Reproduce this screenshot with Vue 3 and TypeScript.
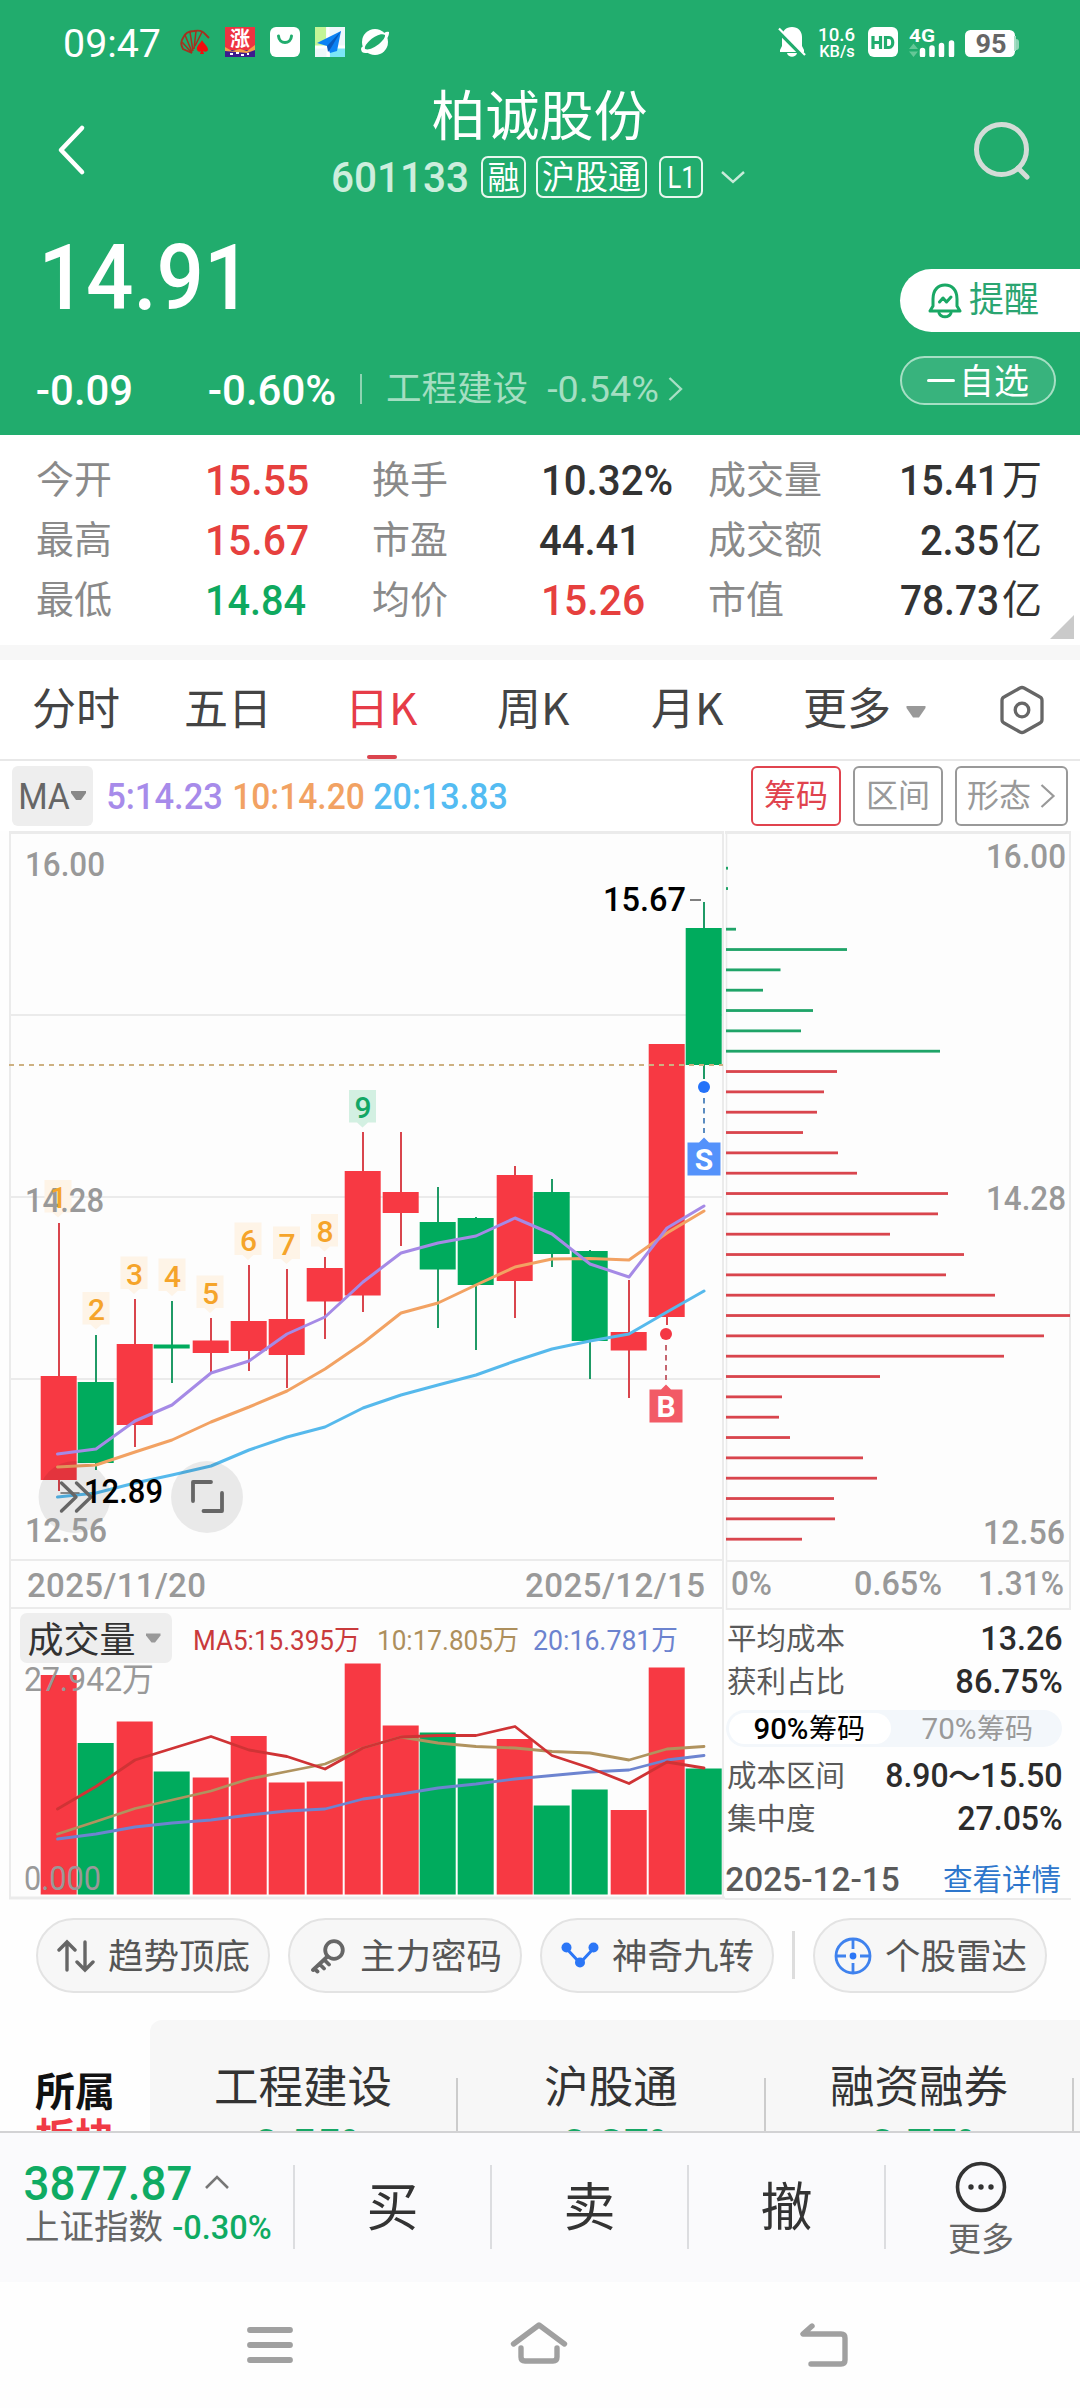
<script setup lang="ts">
import { h, type FunctionalComponent } from 'vue'

// Condensed numeral label: `w` is the drawn width, `s` the font size.
const Num: FunctionalComponent<{ t: string; w: number; s: number }> = (p) =>
  h('svg', { class: 'num', width: p.w, height: p.s * 0.711, style: 'overflow:visible;flex:none;display:block' }, [
    h('text', {
      x: -0.05 * p.s,
      y: p.s * 0.711,
      'font-size': p.s,
      fill: 'currentColor',
      textLength: p.w + 0.1 * p.s,
      lengthAdjust: 'spacingAndGlyphs',
    }, p.t),
  ])
Num.props = ['t', 'w', 's']

interface Stat { label: string; value: string; w: number; tone: string; unit?: string }
const stats: Stat[] = [
  { label: '今开', value: '15.55', w: 100, tone: 'up' },
  { label: '换手', value: '10.32%', w: 128, tone: '' },
  { label: '成交量', value: '15.41', w: 96, tone: '', unit: '万' },
  { label: '最高', value: '15.67', w: 100, tone: 'up' },
  { label: '市盈', value: '44.41', w: 98, tone: 'wide' },
  { label: '成交额', value: '2.35', w: 75, tone: '', unit: '亿' },
  { label: '最低', value: '14.84', w: 97, tone: 'down' },
  { label: '均价', value: '15.26', w: 100, tone: 'up' },
  { label: '市值', value: '78.73', w: 95, tone: '', unit: '亿' },
]

const RED = '#f73943'
const GREEN = '#00ab5d'

const centers = [59, 96, 135, 172, 211, 249, 287, 325, 363, 401, 438, 476, 515, 552, 590, 629, 667, 704]
// [rising, body top, body bottom, high, low]
const candles: [number, number, number, number, number][] = [
  [1, 1376, 1480, 1223, 1491], [0, 1382, 1463, 1335, 1470], [1, 1344, 1425, 1299, 1447],
  [0, 1344.5, 1348.5, 1301, 1383], [1, 1340.5, 1353, 1318, 1374], [1, 1321, 1351, 1265, 1371],
  [1, 1319, 1355, 1269, 1388], [1, 1268, 1301.5, 1257, 1339], [1, 1171, 1295.5, 1132, 1312],
  [1, 1192, 1213, 1132, 1246], [0, 1222, 1269.5, 1187, 1328], [0, 1218, 1285, 1217, 1350],
  [1, 1175, 1281, 1166, 1318], [0, 1192, 1254, 1179, 1267], [0, 1251, 1341, 1250, 1379],
  [1, 1332, 1350.5, 1280, 1398], [1, 1044, 1317, 1044, 1325], [0, 928, 1065, 902, 1079],
]
const volumes = [1675, 1743, 1721.5, 1771.5, 1777.5, 1736, 1782.5, 1781.5, 1663.5, 1725.5, 1732.5, 1778.5, 1739, 1805.5, 1789.5, 1810, 1667.5, 1768.5]

const line = (ys: number[]) => ys.map((y, i) => `${centers[i] - (i === 0 ? 1.5 : 0)},${y}`).join(' ')
const ma5 = line([1454, 1449, 1421, 1405, 1373, 1361, 1334, 1317, 1282, 1253, 1243, 1236, 1218, 1234, 1264, 1277, 1228, 1206])
const ma10 = line([1467, 1465, 1452, 1440, 1422, 1407, 1391, 1369, 1343, 1313, 1303, 1285, 1267, 1259, 1258.5, 1260, 1233, 1211])
const ma20 = line([1497, 1493, 1483, 1475, 1466, 1450, 1437, 1427, 1408, 1395, 1385, 1375, 1361, 1349, 1341, 1334, 1312, 1291])
const vma5 = line([1809, 1786.5, 1760, 1748.5, 1736.5, 1750, 1756.5, 1769, 1748, 1737, 1735.5, 1735.5, 1726.5, 1755.5, 1768, 1783.5, 1762, 1768])
const vma10 = line([1834, 1821.5, 1808.5, 1800, 1791, 1779, 1771.5, 1764, 1748, 1737, 1743, 1746.5, 1748, 1751.5, 1753, 1760, 1749, 1746.5])
const vma20 = line([1839, 1834, 1827, 1823, 1820, 1815, 1811, 1809, 1799, 1794, 1788, 1784, 1779, 1775.5, 1772, 1770, 1760, 1755.5])

// nine-turn markers: [centre x, top]
const tags: [number, number][] = [[58, 1180], [96, 1292], [134, 1256.5], [172, 1258.5], [210, 1275.5], [248, 1222.5], [286.5, 1226.5], [324.5, 1214], [362.5, 1090]]

// end x of every price level of the chip distribution
const chips = [728, 728, 0, 736, 847, 780.5, 763, 813, 801, 940, 837, 824, 817, 803, 838, 857, 948, 938, 890, 964, 946, 995, 1070, 1044, 1004, 880, 782, 779, 790, 863, 877, 834, 835, 802]

const sectors = [
  { name: '工程建设', change: '-0.55%' },
  { name: '沪股通', change: '-0.37%' },
  { name: '融资融券', change: '-0.77%' },
]
</script>

<template>
  <div class="screen">
    <header class="head">
      <div class="status">
        <Num class="r" t="09:47" :w="94" :s="39.5" />
        <svg class="s1" width="30" height="30" viewBox="0 0 30 30" fill="none" stroke="#a5301f" stroke-width="1.5">
          <path d="M12 26L3 22C0 17 1 14 3 11C5 6 10 4 14 4C19 3 23 4 25 7L29 11" stroke-width="1.900" />
          <path d="M12 26L2 15M12 25L5 8M13 24L10 5M14 22L16 4M15 19L22 5" />
          <path d="M22 13C20 17 16 19 17 23C18 25 20 25 21 24L20 27H24L23 24C25 25 27 25 28 23C28 19 24 17 22 13Z" fill="#f30d0d" stroke="none" />
        </svg>
        <svg width="30" height="30" viewBox="0 0 30 30">
          <rect width="30" height="30" fill="#ee3341" />
          <rect y="23" width="30" height="7" fill="#3d1b8e" />
          <path d="M0 20L7 24L15 22L22 24L30 18V23L22 26L0 24Z" fill="#f5a04a" />
          <path d="M5 27H8M11 26H14M16 28H19M22 27H24" stroke="#fff" stroke-width="2" />
          <text x="5" y="19" font-size="20" font-weight="700" fill="#fff">涨</text>
        </svg>
        <svg width="30" height="30" viewBox="0 0 30 30"><rect width="30" height="30" rx="6" fill="#fff" /><path d="M8.500 9C9 17.500 21 17.500 21.500 9" fill="none" stroke="#21ac6d" stroke-width="3" stroke-linecap="round" /></svg>
        <svg width="30" height="30" viewBox="0 0 30 30">
          <rect width="30" height="30" fill="#eef7fa" /><rect width="11" height="20" fill="#c3f597" /><rect x="15" y="21" width="15" height="9" fill="#7be6f7" /><path d="M0 20H30M13 0V30" stroke="#fff" stroke-width="3" />
          <path d="M26 4L2 16L12 19L15 26L22 24Z" fill="#0b82f4" /><path d="M26 4L12 19L13 25L16 21Z" fill="#0759bd" />
        </svg>
        <svg width="30" height="30" viewBox="0 0 30 30">
          <circle cx="15" cy="15" r="13" fill="#fff" /><path d="M2 25C-2 18 7 19 15 14C22 10 24 3 29 5C30 14 9 30 2 25Z" fill="#fff" />
          <path d="M5 22C3 17 19 4 25 8C26 13 11 25 5 22Z" fill="#21ac6d" />
        </svg>
        <svg class="bell" width="28" height="30" viewBox="0 0 28 30">
          <path d="M14 0C20 0 24 4 24 10V19L26 23V25H2V23L4 19V10C4 4 8 0 14 0ZM9 26H19C18 31 10 31 9 26Z" fill="#fff" />
          <path d="M-1 3L25 29" stroke="#21ac6d" stroke-width="4" /><path d="M1 1.500L27 28" stroke="#fff" stroke-width="2.200" />
        </svg>
        <div class="speed"><Num class="m" t="10.6" :w="35" :s="19" /><Num class="m" t="KB/s" :w="34" :s="16.5" /></div>
        <svg class="hd" width="30" height="30" viewBox="0 0 30 30"><rect width="30" height="30" rx="6" fill="#fff" /><path d="M5 9V22M12.500 9V22M5 15.500H12.500M17.500 10.500H21C26 10.500 26 20.500 21 20.500H17.500Z" fill="none" stroke="#21ac6d" stroke-width="3.200" /></svg>
        <svg class="sig" width="46" height="30" viewBox="0 0 46 30">
          <text x="0" y="14.500" font-size="19" font-weight="700" fill="#fff" textLength="26" lengthAdjust="spacingAndGlyphs">4G</text>
          <path d="M0 22L4.500 16.500L9 22ZM0 24.500L4.500 30L9 24.500Z" fill="#65c797" />
          <path d="M13.500 23.500V28M23 21V28M32.500 18.500V28M42.500 16V28" stroke="#fff" stroke-width="5.500" stroke-linecap="round" />
        </svg>
        <svg class="bat" width="55" height="28" viewBox="0 0 55 28"><rect x="46" y="9" width="8" height="11" rx="3" fill="#8fd5b5" /><rect width="50" height="27" rx="5.500" fill="#fff" /><path d="M50 6V21" stroke="#a6dec4" stroke-width="2" /><text x="10.500" y="23" font-size="25" font-weight="700" fill="#666" textLength="31" lengthAdjust="spacingAndGlyphs">95</text></svg>
      </div>

      <div class="titlebar">
        <svg class="back" width="30" height="52" viewBox="0 0 30 52"><path d="M26 4L5 26L26 48" fill="none" stroke="#fff" stroke-width="4.600" stroke-linecap="round" stroke-linejoin="round" /></svg>
        <div class="title">
          <h1>柏诚股份</h1>
          <div class="sub">
            <Num class="code" t="601133" :w="134" :s="42" />
            <span class="badge">融</span><span class="badge wide">沪股通</span><span class="badge l1"><Num t="L1" :w="25" :s="31" /></span>
            <svg width="26" height="16" viewBox="0 0 26 16"><path d="M2 3L13 13L24 3" fill="none" stroke="#c8ebd9" stroke-width="2.400" /></svg>
          </div>
        </div>
        <svg width="58" height="60" viewBox="0 0 58 60" fill="none" stroke="#d3dcd7" stroke-width="5"><circle cx="28.500" cy="28.500" r="25" /><path d="M45 47L54 56" stroke-linecap="round" /></svg>
      </div>

      <div class="quote">
        <div class="qleft">
          <Num class="m" t="14.91" :w="204" :s="90" />
          <div class="change">
            <Num class="m" t="-0.09" :w="93" :s="43" />
            <Num class="m pct" t="-0.60%" :w="124" :s="43" />
            <i class="bar"></i>
            <span class="industry">工程建设</span>
            <Num class="r soft" t="-0.54%" :w="108" :s="37" />
            <svg class="more" width="15" height="26" viewBox="0 0 15 26"><path d="M1.500 2L13 13L1.500 24" fill="none" stroke="#a8dfc5" stroke-width="2.400" /></svg>
          </div>
        </div>
        <div class="qright">
          <div class="remind">
            <svg width="34" height="36" viewBox="0 0 34 36" fill="none" stroke="#1aa865" stroke-width="3" stroke-linejoin="round" stroke-linecap="round"><path d="M5 16C5 7 10 2 17 2S29 7 29 16V23L32 28H2L5 23Z" /><path d="M11 30C13 35 21 35 23 30" /><path d="M11.500 19L15 15L18.500 19L23 14" /></svg>
            <span>提醒</span>
          </div>
          <div class="fav"><i></i><span>自选</span></div>
        </div>
      </div>
    </header>

    <section class="stats">
      <template v-for="s in stats" :key="s.label">
        <span class="label">{{ s.label }}</span>
        <span class="value" :class="s.tone"><Num class="m" :t="s.value" :w="s.w" :s="42.500" /><b v-if="s.unit">{{ s.unit }}</b></span>
      </template>
      <i class="fold"></i>
    </section>

    <nav class="tabs">
      <span class="t1">分时</span><span class="t2">五日</span><span class="t3 on">日K</span><span class="t4">周K</span><span class="t5">月K</span><span class="t6">更多</span>
      <svg width="22" height="14" viewBox="0 0 22 14"><path d="M1.500 1H20.500V3L14 12.500H8L1.500 3Z" fill="#999" /></svg>
      <svg class="gear" width="44" height="50" viewBox="0 0 44 50" fill="none" stroke="#666" stroke-width="3.300" stroke-linejoin="round"><path d="M20 3Q22 2 24 3L40 12Q42 13 42 15.500V34.500Q42 37 40 38L24 47Q22 48 20 47L4 38Q2 37 2 34.500V15.500Q2 13 4 12Z" /><circle cx="22" cy="25" r="6.800" /></svg>
    </nav>

    <div class="mabar">
      <div class="chip"><Num class="r" t="MA" :w="48" :s="37" /><svg width="15" height="10" viewBox="0 0 15 10"><path d="M0 0H15V2L10 9H5L0 2Z" fill="#888" /></svg></div>
      <Num class="m m5" t="5:14.23" :w="113" :s="37" />
      <Num class="m m10" t="10:14.20" :w="129" :s="37" />
      <Num class="m m20" t="20:13.83" :w="131" :s="37" />
      <span class="btn act">筹码</span><span class="btn">区间</span>
      <span class="btn shape">形态<svg width="16" height="26" viewBox="0 0 16 26"><path d="M1.500 2L13.500 13L1.500 24" fill="none" stroke="#999" stroke-width="2.200" /></svg></span>
    </div>

    <div class="charts">
      <svg class="kline" width="725" height="1070" viewBox="0 831 725 1070">
        <rect x="10" y="832" width="713" height="1066" fill="#fdfdfd" />
        <g stroke="#ebebeb" stroke-width="2" fill="none">
          <path d="M9 832.500H724" stroke-width="3" />
          <path d="M10 831V1898M723 831V1898" />
          <path d="M11 1015H723M11 1197H723M11 1379H723M11 1560H723M11 1608H723" />
          <path d="M9 1898H725" stroke-width="3" />
        </g>

        <g v-for="(c, i) in candles" :key="i" :fill="c[0] ? RED : GREEN">
          <rect :x="centers[i] - 1" :y="c[3]" width="2" :height="c[4] - c[3]" :fill="c[0] ? '#d9454d' : '#1f9a66'" />
          <rect :x="centers[i] - 18.300" :y="c[1]" width="36" :height="c[2] - c[1]" />
        </g>
        <path d="M9 1065H723" stroke="#cdb182" stroke-width="2" stroke-dasharray="5 5" />
        <g fill="none" stroke-width="3" stroke-linecap="round" stroke-linejoin="round">
          <polyline :points="ma20" stroke="#56b9ec" /><polyline :points="ma10" stroke="#f2a263" /><polyline :points="ma5" stroke="#a58ae6" />
        </g>

        <path v-for="(t, i) in tags" :key="'b' + i" :d="`M${t[0] - 13.5} ${t[1]}h27v32.500h-8l-5.500 5l-5.500 -5h-8z`" :fill="i === 8 ? '#d3f0e2' : '#fef4e7'" />
        <g class="axis">
          <text x="25" y="876" textLength="80" lengthAdjust="spacingAndGlyphs">16.00</text>
          <text x="25" y="1212" textLength="79" lengthAdjust="spacingAndGlyphs">14.28</text>
        </g>
        <text v-for="(t, i) in tags" :key="'t' + i" class="tag" :x="t[0] + 0.5" :y="t[1] + 28" :fill="i === 8 ? '#13a765' : '#f5a42a'">{{ i + 1 }}</text>

        <circle cx="74.500" cy="1497" r="36" fill="#000" fill-opacity=".08" />
        <circle cx="207" cy="1497" r="36" fill="#000" fill-opacity=".08" />
        <g fill="none" stroke="#666" stroke-linecap="round" stroke-linejoin="round">
          <path d="M61.500 1483L76 1497L61.500 1511M76.500 1483L91 1497L76.500 1511" stroke-width="3.400" />
          <path d="M193 1501V1482H211M203.500 1511H222V1493" stroke-width="3.800" />
          <path d="M61 1493H79" stroke-width="1.500" />
        </g>
        <g class="axis">
          <text x="25" y="1542" textLength="82" lengthAdjust="spacingAndGlyphs">12.56</text>
          <text x="27" y="1597" textLength="179" lengthAdjust="spacing">2025/11/20</text>
          <text x="525" y="1597" textLength="180" lengthAdjust="spacing">2025/12/15</text>
        </g>
        <g class="axis black">
          <text x="84" y="1503" textLength="79" lengthAdjust="spacingAndGlyphs">12.89</text>
          <text x="603" y="911" textLength="83" lengthAdjust="spacingAndGlyphs">15.67</text>
        </g>
        <path d="M690 900H701" stroke="#555" stroke-width="1.500" />

        <circle cx="704" cy="1087" r="6" fill="#2472f9" />
        <path d="M704 1098V1133" stroke="#5b8cc0" stroke-width="2" stroke-dasharray="5.500 4.500" />
        <path d="M687.500 1142.500H699L704 1137.500L709 1142.500H720.500V1175.500H687.500Z" fill="#5492fb" />
        <text class="sign" x="704" y="1170">S</text>
        <circle cx="666" cy="1334" r="6" fill="#f43744" />
        <path d="M666 1345V1380" stroke="#c5656f" stroke-width="2" stroke-dasharray="5.500 4.500" />
        <path d="M649.500 1389.500H661L666 1384.500L671 1389.500H682.500V1422.500H649.500Z" fill="#f25b66" />
        <text class="sign" x="666" y="1417">B</text>

        <rect x="20" y="1613" width="152" height="50" rx="7" fill="#eee" />
        <text class="cjk" x="27.500" y="1653" font-size="36" fill="#333">成交量</text>
        <path d="M146 1633.500H160.500V1635.500L155 1642.500H151.500L146 1635.500Z" fill="#999" />
        <rect v-for="(y, i) in volumes" :key="'v' + i" :x="centers[i] - 18.300" :y="y" width="36" :height="1894.500 - y" :fill="candles[i][0] ? RED : GREEN" />
        <g fill="none" stroke-width="2.800" stroke-linecap="round" stroke-linejoin="round">
          <polyline :points="vma10" stroke="#b0935f" /><polyline :points="vma20" stroke="#6d84d0" /><polyline :points="vma5" stroke="#cf3335" />
        </g>
        <g class="vol">
          <text x="193" y="1650" textLength="167" lengthAdjust="spacingAndGlyphs" fill="#c93a3c">MA5:15.395万</text>
          <text x="377" y="1650" textLength="142" lengthAdjust="spacingAndGlyphs" fill="#ad8f5c">10:17.805万</text>
          <text x="533" y="1650" textLength="145" lengthAdjust="spacingAndGlyphs" fill="#6c83cf">20:16.781万</text>
        </g>
        <g class="axis thin">
          <text x="24" y="1691" textLength="130" lengthAdjust="spacingAndGlyphs">27.942万</text>
          <text x="24" y="1890" textLength="77" lengthAdjust="spacingAndGlyphs">0.000</text>
        </g>
      </svg>

      <div class="side">
        <svg width="355" height="780" viewBox="725 831 355 780">
          <rect x="727" y="832" width="343" height="777" fill="#fdfdfd" />
          <g stroke="#ebebeb" stroke-width="2" fill="none"><path d="M725 832.500H1071" stroke-width="3" /><path d="M726.500 832V1610" stroke-width="1.500" /><path d="M1070 831V1610M727 1561H1070M726 1609H1071" /></g>
          <template v-for="(x, i) in chips" :key="i">
            <rect v-if="x" x="726" :y="866.800 + i * 20.333" :width="x - 726" height="2.800" :fill="i < 10 ? '#1fa468' : '#d9454d'" />
          </template>
          <g class="axis">
            <text x="986" y="868" textLength="80" lengthAdjust="spacingAndGlyphs">16.00</text>
            <text x="986" y="1210" textLength="80" lengthAdjust="spacingAndGlyphs">14.28</text>
            <text x="983" y="1544" textLength="82" lengthAdjust="spacingAndGlyphs">12.56</text>
            <text x="731" y="1595" textLength="41" lengthAdjust="spacingAndGlyphs">0%</text>
            <text x="854" y="1595" textLength="88" lengthAdjust="spacingAndGlyphs">0.65%</text>
            <text x="978" y="1595" textLength="86" lengthAdjust="spacingAndGlyphs">1.31%</text>
          </g>
        </svg>
        <div class="info">
          <div class="row"><span>平均成本</span><Num class="m" t="13.26" :w="79" :s="33.500" /></div>
          <div class="row"><span>获利占比</span><Num class="m" t="86.75%" :w="104" :s="33.500" /></div>
          <div class="switch">
            <div class="sel"><Num class="m" t="90%" :w="52" :s="30" /><span>筹码</span></div>
            <div class="off"><Num t="70%" :w="52" :s="30" /><span>筹码</span></div>
          </div>
          <div class="row"><span>成本区间</span><div class="range"><Num class="m" t="8.90" :w="60" :s="33.500" /><b>～</b><Num class="m" t="15.50" :w="79" :s="33.500" /></div></div>
          <div class="row"><span>集中度</span><Num class="m" t="27.05%" :w="102" :s="33.500" /></div>
          <div class="row last"><Num class="m date" t="2025-12-15" :w="171" :s="33.500" /><a>查看详情</a></div>
        </div>
      </div>
    </div>

    <div class="tools">
      <div class="tool"><svg width="38" height="34" viewBox="0 0 38 34" fill="none" stroke="#666" stroke-width="3.400" stroke-linecap="round"><path d="M10 31V3M2 11L10 3L18 11M28 3V31M20 23L28 31L36 23" /></svg><span>趋势顶底</span></div>
      <div class="tool"><svg width="38" height="36" viewBox="0 0 38 36" fill="none" stroke="#666" stroke-width="3.800" stroke-linecap="round"><circle cx="25" cy="12" r="8.800" /><path d="M18.500 18.500L4 32M11 26.500L15 30.500M5.500 31L8.500 33.500M15.500 22L20 26.500" /></svg><span>主力密码</span></div>
      <div class="tool"><svg width="38" height="34" viewBox="0 0 38 34"><path d="M5 9L19 24L33 9" fill="none" stroke="#2b76f6" stroke-width="3" /><g fill="#2b76f6"><circle cx="5.500" cy="8.500" r="5" /><circle cx="19" cy="23.500" r="5" /><circle cx="32.500" cy="8.500" r="5" /></g></svg><span>神奇九转</span></div>
      <i></i>
      <div class="tool"><svg width="38" height="38" viewBox="0 0 38 38" fill="none" stroke="#3f82ee" stroke-width="2.800"><circle cx="19" cy="19" r="17" /><path d="M19 3V12M19 26V35M3 19H12M26 19H35" /><circle cx="19" cy="19" r="3.400" fill="#2b76f6" stroke="none" /></svg><span>个股雷达</span></div>
    </div>

    <section class="sectors">
      <div class="belong"><b>所属</b><b class="red">板块</b></div>
      <div class="list">
        <div v-for="s in sectors" :key="s.name" class="sector"><span>{{ s.name }}</span><Num class="m" :t="s.change" :w="130" :s="43" /></div>
      </div>
    </section>

    <footer class="trade">
      <div class="index">
        <div class="line1"><Num class="m" t="3877.87" :w="164" :s="49" /><svg width="26" height="16" viewBox="0 0 26 16"><path d="M2 14L13 3L24 14" fill="none" stroke="#777" stroke-width="2.600" /></svg></div>
        <div class="line2"><span>上证指数</span><Num class="m" t="-0.30%" :w="96" :s="34" /></div>
      </div>
      <div class="act-btn">买</div><div class="act-btn">卖</div><div class="act-btn">撤</div>
      <div class="act-btn dots">
        <svg width="54" height="54" viewBox="0 0 54 54"><circle cx="27" cy="27" r="23.500" fill="none" stroke="#333" stroke-width="3.600" /><g fill="#333"><circle cx="17" cy="27" r="2.700" /><circle cx="27" cy="27" r="2.700" /><circle cx="37" cy="27" r="2.700" /></g></svg>
        <span>更多</span>
      </div>
    </footer>

    <div class="sysnav">
      <svg width="46" height="38" viewBox="0 0 46 38" stroke="#a0a0a0" stroke-width="5.800" stroke-linecap="round"><path d="M3 4H43M3 19H43M3 34H43" /></svg>
      <svg class="home" width="58" height="46" viewBox="0 0 58 46" fill="none" stroke="#a0a0a0" stroke-width="5.400" stroke-linecap="round" stroke-linejoin="round"><path d="M3.500 24L29 5L54.500 24" /><path d="M11 28V37Q11 41 15 41H43Q47 41 47 37V28" /></svg>
      <svg width="50" height="46" viewBox="0 0 50 46" fill="none" stroke="#a0a0a0" stroke-width="5.400" stroke-linecap="round" stroke-linejoin="round"><path d="M13 4L4 12H42Q46 12 46 16V38Q46 42 42 42H12" /></svg>
    </div>
  </div>
</template>

<style>
body { background: #fff; }
.num { font-family: Roboto, "Noto Sans CJK SC", sans-serif; }
.num.m { font-weight: 500; }
</style>

<style scoped>
.screen { width: 1080px; height: 2408px; overflow: hidden; background: #fefefe; font-family: "Noto Sans CJK SC", sans-serif; color: #333; }
.screen svg { flex: none; display: block; }
.head { height: 435px; background: #21ac6d; color: #fff; }
.status { height: 84px; display: flex; align-items: center; padding-left: 65px; box-sizing: border-box; gap: 15px; }
.status .num { margin-top: 3px; }
.s1 { margin-left: 6px; }
.bell { margin-left: 373px; }
.speed { display: flex; flex-direction: column; gap: 4px; margin-left: -3px; align-items: flex-end; width: 36px; }
.status .speed .num { margin: 0; }
.hd { margin-left: -1px; }
.sig { margin-left: -4px; font-family: Roboto, sans-serif; }
.bat { margin-left: -5px; font-family: Roboto, sans-serif; margin-top: 3px; }
.titlebar { display: flex; height: 114px; padding-left: 56px; padding-right: 49px; box-sizing: border-box; justify-content: space-between; }
.titlebar > svg { margin-top: 37px; }
.titlebar > .back { margin-top: 40px; margin-right: 20px; }
.title { display: flex; flex-direction: column; align-items: center; }
h1 { margin: 0; font-size: 54px; line-height: 57px; font-weight: 400; }
.sub { margin-top: 15px; display: flex; align-items: center; height: 42px; }
.code { color: #cdeedd; margin-right: 14px; font-weight: 500; }
.badge { box-sizing: border-box; height: 42px; width: 45px; border: 2px solid #e8f7ef; border-radius: 7px; font-size: 32px; line-height: 34px; text-align: center; margin-right: 12px; }
.badge.wide { width: 111px; font-size: 33px; }
.badge.l1 { width: 44px; display: flex; align-items: center; justify-content: center; margin-right: 17px; }
.quote { display: flex; justify-content: space-between; }
.qleft { padding: 47px 0 0 43px; }
.change { display: flex; align-items: center; height: 40px; margin: 60px 0 0 -5px; }
.pct { margin-left: 79px; }
.bar { width: 2px; height: 30px; background: #8ed4b2; margin: 0 24px 0 26px; }
.industry { font-size: 35.500px; line-height: 40px; margin-top: -5px; color: #a4dec2; }
.soft { color: #a4dec2; margin-left: 21px; }
.more { margin-left: 11px; }
.qright { width: 180px; padding-top: 71px; }
.remind { height: 63px; border-radius: 32px 0 0 32px; background: #fff; display: flex; align-items: center; padding-left: 28px; color: #2aa571; }
.remind span { font-size: 35px; line-height: 54px; margin: -8px 0 0 7px; }
.fav { margin-top: 24px; width: 156px; height: 49px; box-sizing: border-box; border: 2px solid #a6dfc4; background: #38b37d; border-radius: 25px; display: flex; align-items: center; padding-left: 25px; }
.fav i { width: 28px; height: 3.500px; background: #fff; border-radius: 2px; }
.fav span { font-size: 35px; line-height: 40px; margin: -4px 0 0 4px; }
.stats { position: relative; height: 210px; box-sizing: border-box; padding: 15px 0 0 36px; display: grid; grid-template-columns: 171px 165px 171px 165px 120px 214px; grid-auto-rows: 60px; background: #fff; }
.label { font-size: 38px; line-height: 53px; color: #8a8a8a; white-space: nowrap; }
.value { display: flex; align-items: center; }
.value:nth-child(6n) { justify-content: flex-end; }
.value b { font-weight: 400; font-size: 40px; line-height: 60px; margin: -6px 0 0 5px; }
.wide { margin-left: -2px; }
.up { color: #e6403e; }
.down { color: #0fa95f; }
.fold { position: absolute; right: 6px; bottom: 6px; border-left: 24px solid transparent; border-bottom: 24px solid #cacaca; }
.tabs { height: 116px; box-sizing: border-box; border-top: 15px solid #f7f7f7; border-bottom: 2px solid #e8e8e8; display: flex; align-items: center; padding-left: 32px; background: #fff; font-size: 44px; line-height: 92px; color: #444; }
.tabs span { height: 99px; flex: none; white-space: nowrap; position: relative; }
.t1 { width: 152px; } .t2 { width: 161px; } .t3 { width: 152px; } .t4 { width: 154px; } .t5 { width: 152px; } .t6 { width: 102px; }
.on { color: #e63c48; }
.on::after { content: ""; position: absolute; left: 22px; bottom: 0; width: 30px; height: 4px; border-radius: 2px; background: #db444e; }
.tabs svg { margin-top: 5px; }
.tabs .gear { margin: 0 0 0 73px; }
.mabar { height: 70px; box-sizing: border-box; padding: 5px 12px; display: flex; align-items: center; background: #fff; }
.chip { width: 81px; height: 60px; border-radius: 6px; background: #eee; color: #666; display: flex; align-items: center; padding-left: 8px; box-sizing: border-box; gap: 3px; }
.m5 { color: #a78bea; margin-left: 15px; } .m10 { color: #f2a263; margin-left: 13px; } .m20 { color: #54bcf2; margin-left: 12px; margin-right: auto; }
.btn { box-sizing: border-box; width: 90px; height: 60px; border: 2px solid #999; border-radius: 6px; font-size: 32px; line-height: 51px; color: #999; text-align: center; margin-left: 12px; }
.act { border-color: #e0434e; color: #e0434e; }
.shape { width: 113px; display: flex; align-items: center; padding: 0 0 5px 10px; gap: 9px; }
.shape svg { margin-top: 5px; }
.charts { display: flex; height: 1070px; }
.side { width: 355px; }
.kline, .side svg { font-family: Roboto, "Noto Sans CJK SC", sans-serif; }
.axis { font-size: 33px; fill: #999; font-weight: 500; }
.axis.black { fill: #000; }
.axis.thin { font-weight: 400; }
.tag { font-size: 30px; font-weight: 500; text-anchor: middle; }
.sign { font-size: 30px; font-weight: 700; fill: #fff; text-anchor: middle; }
.cjk { font-family: "Noto Sans CJK SC", sans-serif; }
.vol { font-size: 28px; }
.info { width: 346px; height: 289px; box-sizing: border-box; border-bottom: 2px solid #ebebeb; padding: 5px 10px 0 2px; color: #2a2a2a; }
.row { display: flex; justify-content: space-between; align-items: center; height: 43px; font-size: 29.500px; color: #2c2c2c; }
.row span { color: #5a5a5a; line-height: 43px; margin-top: -2px; }
.row a { color: #2d76cc; line-height: 36px; margin: -3px 0 0; }
.date { color: #5a5a5a; }
.switch { height: 37px; border-radius: 19px; margin: 8px 0 6px -1px; background: #f3f7fb; width: 336px; display: flex; align-items: center; padding: 3px; box-sizing: border-box; font-size: 28px; line-height: 28px; }
.switch span { margin: -4px 0 0 2px; }
.sel, .off { width: 162px; height: 31px; display: flex; align-items: center; justify-content: center; background: #fff; border-radius: 16px; color: #000; }
.off { background: none; color: #999; margin-left: 6px; }
.range { display: flex; align-items: center; }
.range b { font-weight: 500; font-size: 33px; line-height: 43px; margin: 0 1px; }
.last { margin-top: 18px; }
.tools { height: 119px; box-sizing: border-box; padding: 17px 0 0 36px; display: flex; }
.tool { box-sizing: border-box; width: 234px; height: 75px; border: 2px solid #e3e3e3; border-radius: 38px; background: #f7f7f7; margin-right: 18px; padding-left: 19px; display: flex; align-items: center; gap: 13px; font-size: 35.500px; line-height: 60px; color: #555; white-space: nowrap; }
.tool span { margin-top: -4px; }
.tools i { width: 3px; height: 48px; background: #ddd; margin: 13px 18px 0 0; }
.sectors { height: 111px; overflow: hidden; display: flex; }
.belong { width: 150px; padding: 46px 0 0 35px; box-sizing: border-box; font-size: 40px; line-height: 46px; color: #111; display: flex; flex-direction: column; }
.red { color: #f03a45; }
.list { flex: 1; display: flex; background: #f7f7f7; border-radius: 12px 0 0 0; color: #16a765; }
.sector { width: 308px; flex: none; display: flex; flex-direction: column; align-items: center; position: relative; }
.sector span { font-size: 44.500px; line-height: 60px; color: #333; margin: 34px 2px 14px 0; }
.sector .num { margin-left: 4px; }
.sector::after { content: ""; position: absolute; right: 0; top: 58px; width: 2px; height: 60px; background: #ccc; }
.trade { height: 151px; box-sizing: border-box; border-top: 2px solid #d2d2d4; background: #fafafc; display: flex; }
.index { width: 293px; padding: 32px 0 0 26px; box-sizing: border-box; color: #0fab63; }
.line1 { display: flex; align-items: center; gap: 14px; }
.line2 { display: flex; align-items: center; gap: 11px; margin: 5px 0 0 -1px; }
.line2 span { font-size: 34.500px; line-height: 48px; color: #666; margin-top: -5px; }
.line2 .num { margin-top: 1px; }
.act-btn { width: 197px; position: relative; font-size: 52px; line-height: 141px; text-align: center; padding-left: 2px; box-sizing: border-box; }
.act-btn::before { content: ""; position: absolute; left: 0; top: 32px; width: 2px; height: 84px; background: #dcdde0; }
.dots { width: 194px; display: flex; flex-direction: column; align-items: center; font-size: 33px; line-height: 44px; color: #666; padding-left: 0; }
.dots svg { margin: 27px 0 1px; }
.sysnav { height: 126px; display: flex; align-items: center; justify-content: space-between; padding: 0 231px 0 247px; background: #fefefe; }
.sysnav svg { margin-top: -1px; }
.sysnav .home { margin-left: -22px; margin-right: -8px; margin-top: -4px; }
</style>
